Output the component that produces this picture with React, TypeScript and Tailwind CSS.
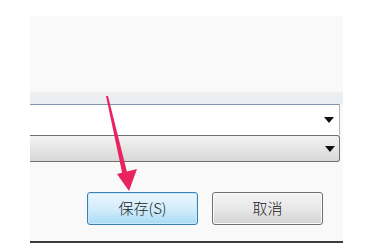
import React from "react";

function DropArrow() {
  return (
    <svg width="10" height="6" viewBox="0 0 10 6" className="shrink-0">
      <path d="M0 0 L10 0 L5 6 Z" fill="#111" />
    </svg>
  );
}

export default function App() {
  return (
    <div
      className="relative w-[379px] h-[252px] bg-white overflow-hidden"
      style={{ fontFamily: '"Noto Sans CJK SC", "Noto Sans", sans-serif' }}
    >
      <div className="pl-[30px] pt-[16px]">
        <div className="w-[313px] bg-[#f9f9f9] flex flex-col">
          <div className="h-[76px]" />
          <div className="h-[12px] bg-gradient-to-b from-[#eeeff0] to-[#e9eef3]" />
          {/* combo 1 */}
          <div className="w-[310px] h-[31px] bg-white border-t border-t-[#7f97ad] border-r border-r-[#b4b4b4] flex items-center justify-end pr-[5px]">
            <DropArrow />
          </div>
          {/* combo 2 */}
          <div className="w-[310px] h-[27px] bg-gradient-to-b from-[#f3f3f3] to-[#d8d8d8] border border-l-0 border-[#6f6f6f] rounded-r-[3px] flex items-center justify-end pr-[4px]">
            <DropArrow />
          </div>
          <div className="h-[30px]" />
          <div className="flex justify-end gap-[14px] pr-[20px]">
            <button className="w-[111px] h-[33px] rounded-[3px] border border-[#3c7fb1] bg-gradient-to-b from-[#eaf6fd] via-[#d4edfb] to-[#a9daf5] shadow-[inset_0_0_0_1px_#c7eafc] text-[15px] font-light text-[#222] flex items-center justify-center">
              保存(S)
            </button>
            <button className="w-[111px] h-[33px] rounded-[3px] border border-[#707070] bg-gradient-to-b from-[#f4f4f4] via-[#e8e8e8] to-[#d2d2d2] shadow-[inset_0_0_0_1px_#fafafa] text-[15px] font-light text-[#222] flex items-center justify-center">
              取消
            </button>
          </div>
          <div className="h-[16px]" />
        </div>
        <div className="w-[313px] h-[2px] bg-[#3a3d40]" />
      </div>

      {/* annotation arrow */}
      <svg
        className="absolute left-0 top-0 pointer-events-none"
        width="379"
        height="252"
        viewBox="0 0 379 252"
      >
        <path d="M106 96 L108 96 L128 176 L123 177 Z" fill="#e8235f" />
        <path d="M129 191 L117 174 L137 169 Z" fill="#e8235f" />
      </svg>
    </div>
  );
}
